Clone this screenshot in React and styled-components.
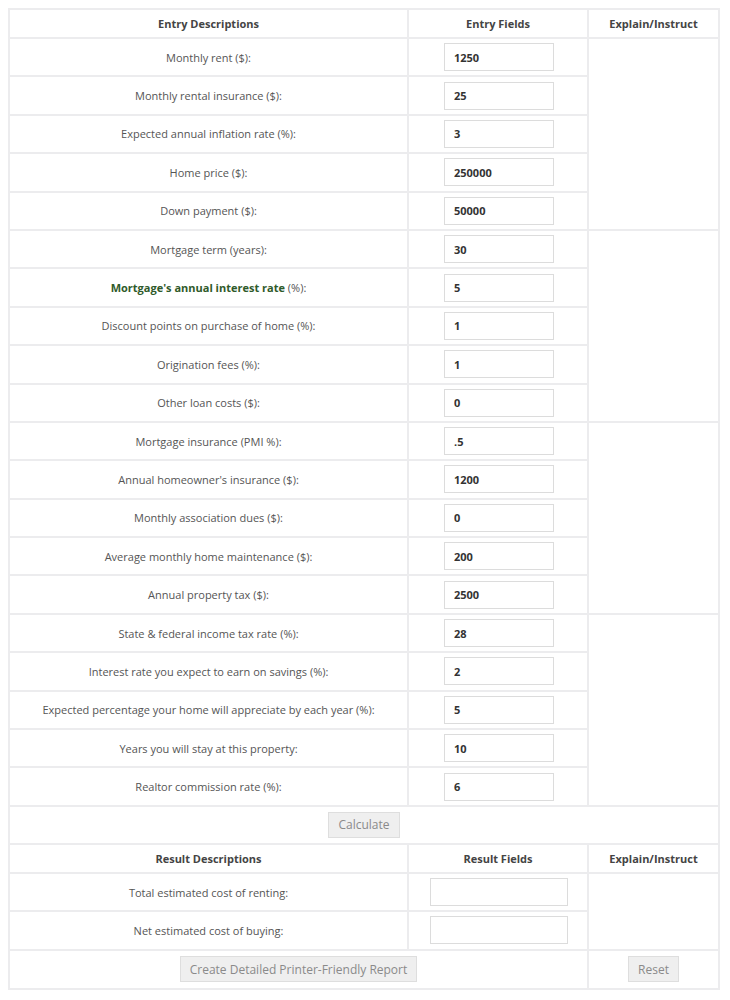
import React from 'react';
import styled, { createGlobalStyle } from 'styled-components';

const Global = createGlobalStyle`
  body {
    margin: 8px;
    background: #fff;
    font-family: "Open Sans", "Liberation Sans", sans-serif;
  }
`;

const Table = styled.table`
  width: 710px;
  border-collapse: collapse;
  border: 1px solid #e4e4e6;
  color: #555;
  font-size: 11px;
  table-layout: fixed;
`;

const Head = styled.th`
  height: 27px;
  padding: 0;
  font-weight: 700;
  color: #444;
  font-size: 11px;
  border: 2px solid #ececee;
  text-align: center;
`;

const Cell = styled.td`
  height: ${p => p.h || 36.4}px;
  padding: 0;
  border: 2px solid #ececee;
  text-align: center;
  vertical-align: middle;
`;

const Strong = styled.span`
  font-weight: 700;
  color: #2f5a2a;
`;

const Field = styled.input`
  box-sizing: border-box;
  width: ${p => p.w || 110}px;
  height: 28px;
  margin: 0 0 0 2px;
  padding: 0 9px;
  border: 1px solid #dcdcdc;
  font-family: inherit;
  font-size: 11px;
  font-weight: 700;
  color: #333;
  outline: none;
  vertical-align: middle;
`;

const Button = styled.button`
  height: 26px;
  padding: 0 9px;
  background: #efefef;
  border: 1px solid #dedede;
  color: #8a8a8a;
  font-family: inherit;
  font-size: 12px;
  cursor: pointer;
`;

const entries = [
  ['Monthly rent ($):', '1250'],
  ['Monthly rental insurance ($):', '25'],
  ['Expected annual inflation rate (%):', '3'],
  ['Home price ($):', '250000'],
  ['Down payment ($):', '50000'],
  ['Mortgage term (years):', '30'],
  [<><Strong>Mortgage's annual interest rate</Strong> (%):</>, '5'],
  ['Discount points on purchase of home (%):', '1'],
  ['Origination fees (%):', '1'],
  ['Other loan costs ($):', '0'],
  ['Mortgage insurance (PMI %):', '.5'],
  ["Annual homeowner's insurance ($):", '1200'],
  ['Monthly association dues ($):', '0'],
  ['Average monthly home maintenance ($):', '200'],
  ['Annual property tax ($):', '2500'],
  ['State & federal income tax rate (%):', '28'],
  ['Interest rate you expect to earn on savings (%):', '2'],
  ['Expected percentage your home will appreciate by each year (%):', '5'],
  ['Years you will stay at this property:', '10'],
  ['Realtor commission rate (%):', '6'],
];

export default function App() {
  return (
    <>
      <Global />
      <Table>
        <colgroup>
          <col style={{ width: 399 }} />
          <col style={{ width: 180 }} />
          <col style={{ width: 131 }} />
        </colgroup>
        <tbody>
          <tr>
            <Head>Entry Descriptions</Head>
            <Head>Entry Fields</Head>
            <Head>Explain/Instruct</Head>
          </tr>
          {entries.map(([label, value], i) => (
            <tr key={i}>
              <Cell>{label}</Cell>
              <Cell><Field defaultValue={value} /></Cell>
              {i % 5 === 0 && <Cell rowSpan={5} />}
            </tr>
          ))}
          <tr>
            <Cell colSpan={3} h={36}><Button>Calculate</Button></Cell>
          </tr>
          <tr>
            <Head>Result Descriptions</Head>
            <Head>Result Fields</Head>
            <Head>Explain/Instruct</Head>
          </tr>
          <tr>
            <Cell>Total estimated cost of renting:</Cell>
            <Cell><Field w={138} /></Cell>
            <Cell rowSpan={2} />
          </tr>
          <tr>
            <Cell>Net estimated cost of buying:</Cell>
            <Cell><Field w={138} /></Cell>
          </tr>
          <tr>
            <Cell colSpan={2} h={37}><Button>Create Detailed Printer-Friendly Report</Button></Cell>
            <Cell h={37}><Button>Reset</Button></Cell>
          </tr>
        </tbody>
      </Table>
    </>
  );
}
